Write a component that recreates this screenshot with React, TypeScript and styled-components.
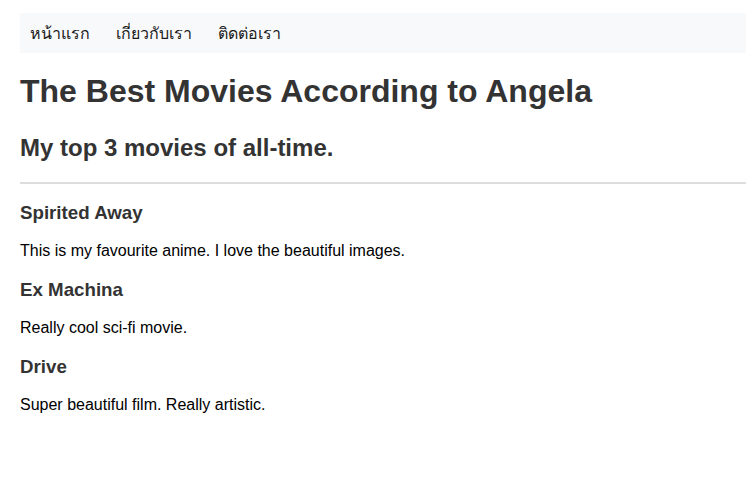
import styled, { createGlobalStyle } from "styled-components";

const GlobalStyle = createGlobalStyle`
  body {
    margin: 0;
    background: #ffffff;
    font-family: "Liberation Sans", Arial, sans-serif;
    color: #000000;
  }
`;

const Page = styled.div`
  padding: 13px 0 0 20px;
  overflow: hidden;
`;

const NavBar = styled.nav`
  display: flex;
  align-items: center;
  height: 40px;
  padding: 0 10px;
  gap: 26px;
  background-color: #f8f9fa;
`;

const NavLink = styled.a`
  font-family: "Noto Sans", "DejaVu Sans", sans-serif;
  font-size: 16px;
  font-weight: 500;
  color: #1a1a1a;
  text-decoration: none;
`;

const Title = styled.h1`
  margin: 19px 0 0;
  font-size: 32px;
  line-height: 38px;
  font-weight: bold;
  color: #333333;
`;

const Subtitle = styled.h2`
  margin: 23px 0 0;
  font-size: 24px;
  line-height: 29px;
  font-weight: bold;
  color: #333333;
`;

const Divider = styled.hr`
  margin: 20px 0 0;
  border: none;
  height: 2px;
  background-color: #dddddd;
`;

const MovieList = styled.div`
  display: flex;
  flex-direction: column;
  padding-top: 18px;
`;

const MovieTitle = styled.h3`
  margin: 0;
  font-size: 18.72px;
  line-height: 22px;
  font-weight: bold;
  color: #333333;
`;

const MovieNote = styled.p`
  margin: 15px 0 16px;
  font-size: 16px;
  line-height: 24px;
  color: #000000;
`;

const movies = [
  { title: "Spirited Away", note: "This is my favourite anime. I love the beautiful images." },
  { title: "Ex Machina", note: "Really cool sci-fi movie." },
  { title: "Drive", note: "Super beautiful film. Really artistic." },
];

export default function App() {
  return (
    <>
      <GlobalStyle />
      <Page>
        <NavBar>
          <NavLink href="#">หน้าแรก</NavLink>
          <NavLink href="#">เกี่ยวกับเรา</NavLink>
          <NavLink href="#">ติดต่อเรา</NavLink>
        </NavBar>
        <Title>The Best Movies According to Angela</Title>
        <Subtitle>My top 3 movies of all-time.</Subtitle>
        <Divider />
        <MovieList>
          {movies.map((movie) => (
            <div key={movie.title}>
              <MovieTitle>{movie.title}</MovieTitle>
              <MovieNote>{movie.note}</MovieNote>
            </div>
          ))}
        </MovieList>
      </Page>
    </>
  );
}
